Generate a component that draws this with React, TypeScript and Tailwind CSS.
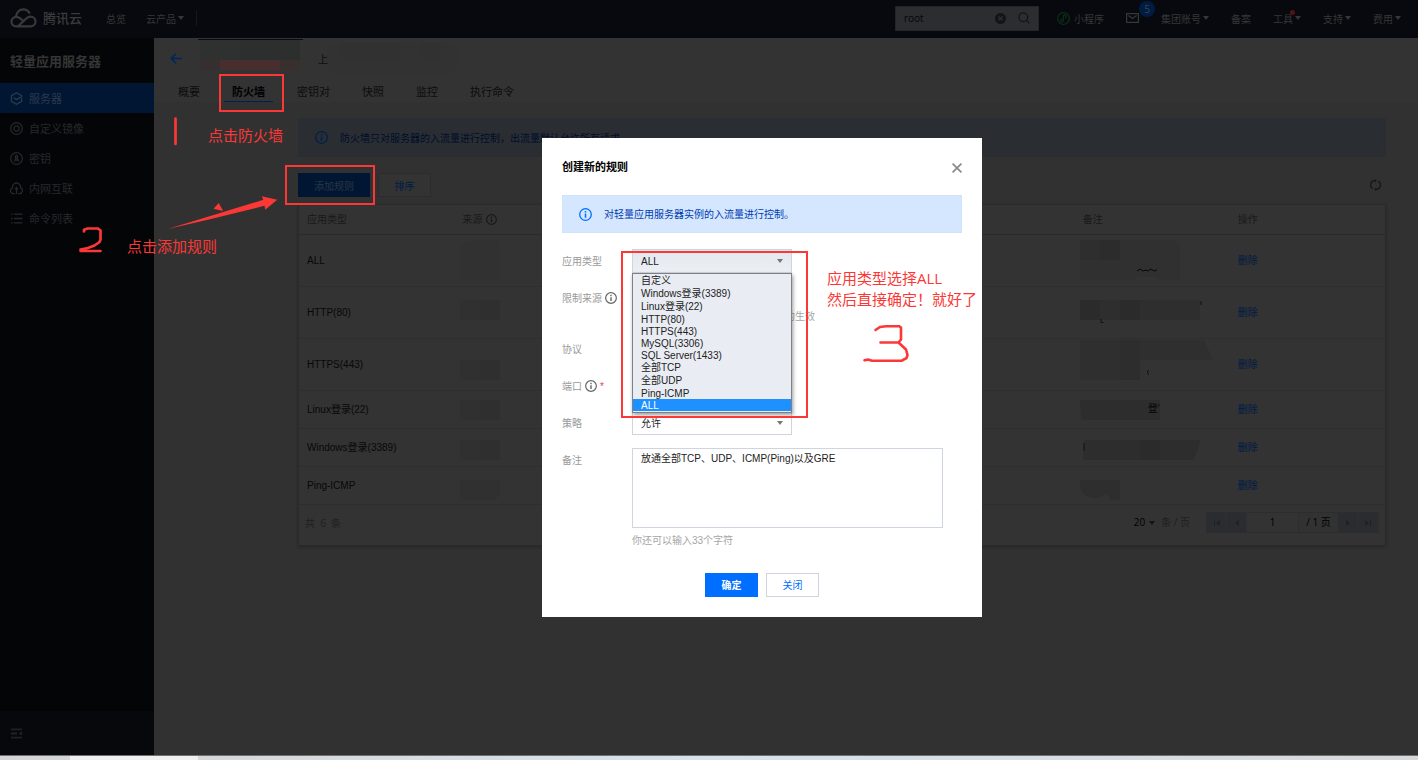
import React from "react";

const ARIAL = "font-['Liberation_Sans','Noto_Sans_CJK_SC',sans-serif]";
const YAHEI = "font-['Open_Sans','Noto_Sans_CJK_SC',sans-serif]";

function Caret({ className = "" }: { className?: string }) {
  return (
    <svg width="6" height="4" viewBox="0 0 6 4" className={`shrink-0 ${className}`} aria-hidden="true">
      <path d="M0 0h6L3 4z" fill="currentColor" />
    </svg>
  );
}

function InfoIcon({ className = "" }: { className?: string }) {
  return (
    <svg viewBox="0 0 13 13" className={`shrink-0 ${className}`} fill="none" stroke="currentColor" aria-hidden="true">
      <circle cx="6.5" cy="6.5" r="5.8" strokeWidth="1.3" />
      <path d="M6.5 5.6v4.2M6.5 3.1v1.5" strokeWidth="1.5" />
    </svg>
  );
}

function CloudLogo() {
  return (
    <svg width="27" height="20" viewBox="0 0 27 20" fill="none" stroke="#38383a" strokeWidth="2.2" aria-hidden="true">
      <path d="M12.600 12.400C10.800 10.500 8.900 8.800 6.200 8.800a4.800 4.800 0 0 0 0 9.600H20.600a4.900 4.900 0 0 0 0-9.800c-1.800 0-3 .7-4.200 1.800L8 18.200" />
      <path d="M5.900 8.800C6.300 4.500 9.300 1.300 13.200 1.300c3 0 5.400 1.700 6.500 4.300" />
    </svg>
  );
}

type NavProps = { label: string; caret?: boolean; dot?: boolean };

function NavItem({ label, caret = true, dot = false }: NavProps) {
  return (
    <a href="#" className="relative flex items-center gap-0.5 whitespace-nowrap">
      {label}
      {caret && <Caret />}
      {dot && <span className="absolute -top-px right-1.5 size-[5px] rounded-full bg-[#571214]" />}
    </a>
  );
}

function TopBar() {
  return (
    <header className="flex h-[38px] shrink-0 items-center bg-[#07090e] pb-0.5 text-[10px] text-[#363739]">
      <a href="#" className="ml-2.5 flex items-center gap-1.5 text-[13px] font-medium text-[#3b3b3d]">
        <CloudLogo />
        腾讯云
      </a>
      <nav className="ml-6 flex items-center gap-5">
        <NavItem label="总览" caret={false} />
        <NavItem label="云产品" />
      </nav>
      <span className="ml-3 h-4 w-px bg-[#15171b]" />

      <div className="mr-[17px] ml-auto flex items-center gap-[22px]">
        <div className="-mr-1 flex h-[25px] w-36 items-center gap-3 border border-[#222428] bg-[#2c2d30] px-2 text-[#141517]">
          <input
            aria-label="搜索"
            defaultValue="root"
            className={`min-w-0 flex-1 bg-transparent text-[10px] text-[#050505] outline-none ${YAHEI}`}
          />
          <button aria-label="清除">
            <svg width="11" height="11" viewBox="0 0 11 11" aria-hidden="true">
              <circle cx="5.5" cy="5.5" r="5.5" fill="#131416" />
              <path d="M3.4 3.4l4.2 4.2M7.6 3.4L3.4 7.6" stroke="#2c2d30" strokeWidth="1.4" />
            </svg>
          </button>
          <button aria-label="查找">
            <svg width="12" height="12" viewBox="0 0 12 12" fill="none" stroke="#131416" strokeWidth="1.3" aria-hidden="true">
              <circle cx="5.3" cy="5.3" r="4.4" />
              <path d="M8.4 8.4l3 3" />
            </svg>
          </button>
        </div>
        <a href="#" className="flex items-center gap-1 whitespace-nowrap">
          <svg width="13" height="13" viewBox="0 0 13 13" fill="none" stroke="#0a2f19" strokeWidth="1.3" aria-hidden="true">
            <circle cx="6.5" cy="6.5" r="5.8" />
            <path d="M4.8 7.2a1.3 1.3 0 1 0 1.5 1.3v-4a1.400 1.400 0 1 1 1.600 1.300" />
          </svg>
          小程序
        </a>
        <a href="#" aria-label="消息" className="relative">
          <svg width="13" height="10" viewBox="0 0 13 10" fill="none" stroke="currentColor" strokeWidth="1.2" aria-hidden="true">
            <path d="M.6.6h11.8v8.8H.6zM2.4 2.6l4.1 3 4.1-3" />
          </svg>
          <span className={`absolute -top-3 left-[13px] flex size-4 items-center justify-center rounded-full bg-[#001c42] text-[10px] text-[#3c444e] ${YAHEI}`}>
            5
          </span>
        </a>
        <NavItem label="集团账号" />
        <NavItem label="备案" caret={false} />
        <NavItem label="工具" dot />
        <NavItem label="支持" />
        <NavItem label="费用" />
      </div>
    </header>
  );
}

const sideIcons: Record<string, React.ReactNode> = {
  server: (
    <path d="M1.400 4v5.400l5.100 2.800 5.100-2.800V6.200M1.400 6.200V3.600L6.500.8l5.100 2.800v1.200L6.500 7.400 3.600 5.800" />
  ),
  image: (
    <>
      <circle cx="6.5" cy="6.5" r="5.8" />
      <circle cx="6.5" cy="6.5" r="2.6" />
    </>
  ),
  key: (
    <>
      <circle cx="6.5" cy="6.5" r="5.8" />
      <circle cx="6.5" cy="4.700" r="1.200" />
      <path d="M5.800 6L4.400 9.400M7.200 6l1.400 3.400M5.200 8h2.600" />
    </>
  ),
  network: (
    <>
      <path d="M4.800 11.600H3.600A2.900 2.900 0 0 1 2.400 6C2.200 3 4 1 6.500 1s4.300 2 4.100 5a2.900 2.900 0 0 1-1.200 5.600H8.200" />
      <path d="M6.500 12V6M4.900 7.400l1.600-1.800 1.600 1.800" />
    </>
  ),
  list: <path d="M1 2.200h1.600M4 2.200h8.400M1 6.500h1.600M4 6.500h8.400M1 10.800h1.600M4 10.800h8.400" />,
};

const sideItems = [
  { id: "server", label: "服务器" },
  { id: "image", label: "自定义镜像" },
  { id: "key", label: "密钥" },
  { id: "network", label: "内网互联" },
  { id: "list", label: "命令列表" },
];

function SideBar() {
  return (
    <aside className="flex w-[154px] shrink-0 flex-col bg-[#040507]">
      <h1 className="flex h-[45px] items-center px-2.5 text-[13px] font-bold text-[#353535]">轻量应用服务器</h1>
      <nav>
        {sideItems.map((item, i) => (
          <a
            key={item.id}
            href="#"
            className={`flex h-[30px] items-center gap-1.5 px-2.5 text-[11px] ${
              i === 0 ? "bg-[#001633] text-[#2c3a4d]" : "text-[#26282c]"
            }`}
          >
            <svg width="13" height="13" viewBox="0 0 13 13" fill="none" stroke="currentColor" strokeWidth="1.3" aria-hidden="true">
              {sideIcons[item.id]}
            </svg>
            {item.label}
          </a>
        ))}
      </nav>
      <div className="mt-auto flex h-11 items-center bg-[#07080c] px-2.5 text-[#1f2125]">
        <button aria-label="收起菜单">
          <svg width="13" height="11" viewBox="0 0 13 11" aria-hidden="true">
            <path d="M1 1.400h11M1 5.500h6M1 9.600h11" stroke="currentColor" strokeWidth="1.8" fill="none" />
            <path d="M12 3.400v4.200L8.400 5.500z" fill="currentColor" />
          </svg>
        </button>
      </div>
    </aside>
  );
}

const tabs = ["概要", "防火墙", "密钥对", "快照", "监控", "执行命令"];

function PageHeader() {
  return (
    <div className="relative flex h-16 flex-col bg-[#333333] px-4">
      <svg className="absolute top-0 left-0" width="320" height="40" viewBox="154 38 320 40" aria-hidden="true">
        <path d="M198 39.5h105" stroke="#0b0c10" />
        <path d="M200 40h40v20h-40z" fill="#2f3030" />
        <path d="M240 40h60v20h-60z" fill="#2d2f2e" />
        <path d="M200 60h20v10h-17q-3 0-3-3z" fill="#372f2f" />
        <path d="M220 60h60v10h-60z" fill="#482e2e" />
        <path d="M280 60h20v10h-20z" fill="#382f2f" />
        <rect x="327" y="43" width="132" height="32" rx="15" fill="#323232" />
        <path d="M340 43h60v17h-60zM420 43h20v17h-20z" fill="#313131" />
      </svg>
      <div className="relative flex h-10 items-center">
        <button aria-label="返回" className="text-[#00265a]">
          <svg width="12" height="11" viewBox="0 0 12 11" fill="none" stroke="currentColor" strokeWidth="1.6" aria-hidden="true">
            <path d="M6 .7L1.200 5.500 6 10.300M1.200 5.500H12" />
          </svg>
        </button>
        <span className="ml-[136px] text-[10px] text-[#120c08]">上</span>
      </div>
      <div role="tablist" className="flex h-6 gap-4 text-[11px] text-[#0c0c0c]">
        {tabs.map((t, i) => (
          <button
            key={t}
            role="tab"
            aria-selected={i === 1}
            className={`border-b px-2 pt-1 pb-0.5 leading-4 whitespace-nowrap ${
              i === 1 ? "border-[#002050] font-bold text-black" : "border-transparent"
            }`}
          >
            {t}
          </button>
        ))}
      </div>
    </div>
  );
}

const rows = [
  { name: "ALL", tall: true },
  { name: "HTTP(80)", tall: true },
  { name: "HTTPS(443)", tall: true },
  { name: "Linux登录(22)", tall: false },
  { name: "Windows登录(3389)", tall: false },
  { name: "Ping-ICMP", tall: false },
];

function SourceMosaic() {
  return (
    <svg className="absolute top-0 left-0" width="60" height="272" viewBox="454 235 60 272" aria-hidden="true">
      <path d="M460 248q6-8 20-8h18l2 20v20h-40z" fill="#313131" />
      <g fill="#303030">
        <path d="M460 300h40v20h-40zM460 360h40v20h-40zM460 400h40v20h-40zM460 440h40v20h-40z" />
        <path d="M460 480h40v12q-2 8-10 8h-30z" />
      </g>
      <path
        d="M480 300h20v20h-20zM480 360h20v20h-20zM480 400h20v20h-20zM480 440h20v20h-20z"
        fill="#2f2f2f"
      />
    </svg>
  );
}

function NoteMosaic() {
  return (
    <>
      <svg className="absolute top-0 left-0" width="160" height="272" viewBox="1075 235 160 272" aria-hidden="true">
        <path d="M1080 240h95q5 2 5 8v32h-20l-3-3h-19l-2 3h-56z" fill="#303030" />
        <path d="M1080 240h20v20h-20z" fill="#2e2e2e" />
        <path d="M1100 240h20v20h-20z" fill="#2c2c2c" />
        <path d="M1080 300h120v20h-120z" fill="#2e2e2e" />
        <path d="M1080 300h20v20h-20zM1120 300h20v20h-20z" fill="#2b2b2b" />
        <path d="M1080 340h124l9 20h-73v20h-60z" fill="#2f2f2f" />
        <path d="M1120 340h20v40h-20z" fill="#2d2d2d" />
        <path d="M1080 400h80v20h-79z" fill="#2d2d2d" />
        <path d="M1084 440h116q-2 12-7 20h-110z" fill="#2d2d2d" />
        <path d="M1140 440h20v20h-20z" fill="#2b2b2b" />
        <path d="M1080 480h40v20h-9l-4-7q-6 5-13 5-12-2-14-10z" fill="#2e2e2e" />
        <path d="M1137 271l3-2 3 2 3-1 2 1 3-2 3 2 3-1" fill="none" stroke="#080808" />
        <path d="M1101 319v3.500h2.500M1148.500 370l-1 2 1 3M1201 301v4M1084 443v8" fill="none" stroke="#101010" />
      </svg>
      <span className="absolute top-[166px] left-[73px] text-[10px] leading-4 text-[#050505]">登'</span>
    </>
  );
}

function RulesTable() {
  return (
    <table className={`w-full table-fixed border-separate border-spacing-0 text-[10px] ${ARIAL}`}>
      <thead className="text-left text-[#191919]">
        <tr className="h-[30px] [&>th]:border-b [&>th]:border-[#2a2a2b] [&>th]:px-2 [&>th]:font-normal">
          <th>应用类型</th>
          <th>
            <span className="flex items-center gap-1">
              来源
              <InfoIcon className="size-[11px]" />
            </span>
          </th>
          <th />
          <th />
          <th />
          <th>备注</th>
          <th>操作</th>
        </tr>
      </thead>
      <tbody className="text-[#080808]">
        {rows.map((r, i) => (
          <tr
            key={r.name}
            className={`[&>td]:border-b [&>td]:border-[#2e2e2f] [&>td]:px-2 ${r.tall ? "h-[52px]" : "h-[38px]"}`}
          >
            <td>{r.name}</td>
            <td className="relative">{i === 0 && <SourceMosaic />}</td>
            <td />
            <td />
            <td />
            <td className="relative">{i === 0 && <NoteMosaic />}</td>
            <td>
              <a href="#" className="text-[#001c45]">
                删除
              </a>
            </td>
          </tr>
        ))}
      </tbody>
    </table>
  );
}

function PageButton({ label, d }: { label: string; d: string }) {
  return (
    <button aria-label={label} className="flex w-5 items-center justify-center border-r border-[#2e2f31] bg-[#2a2c2f]">
      <svg width="6" height="6" viewBox="0 0 6 6" fill="#202123" aria-hidden="true">
        <path d={d} />
      </svg>
    </button>
  );
}

function TableFooter() {
  return (
    <div className={`flex h-10 items-start pt-[7px] pr-1.5 pl-1.5 text-[10px] text-[#1f1f1f] ${YAHEI}`}>
      <span className="leading-[22px]">共&nbsp; 6 &nbsp;条</span>
      <div className="ml-auto flex h-[21px] items-center">
        <button className="flex items-center gap-1 text-black">
          20 <Caret className="text-[#141414]" />
        </button>
        <span className="ml-1.5">条 / 页</span>
        <div className="ml-4 flex h-[21px] border border-[#2c2d2f] bg-[#2e2f30] text-black">
          <PageButton label="第一页" d="M0 0h1v6H0zM6 0v6L2 3z" />
          <PageButton label="上一页" d="M5 0v6L1 3z" />
          <input aria-label="页码" defaultValue="1" className="w-[51px] bg-[#333333] text-center outline-none" />
          <span className="flex w-10 items-center justify-center border-l border-[#2c2d2e] bg-[#323232]">/ 1 页</span>
          <PageButton label="下一页" d="M1 0v6l4-3z" />
          <PageButton label="最后一页" d="M0 0v6l4-3zM5 0h1v6H5z" />
        </div>
      </div>
    </div>
  );
}

function Content() {
  return (
    <main className="flex min-w-0 flex-1 flex-col bg-[#313131]">
      <PageHeader />
      <div className="mr-8 ml-36 pt-4">
        <div className="flex h-[39px] items-center gap-3 border border-[#2a2e34] bg-[#2a2e32] px-4 text-[10px] text-[#000d2b]">
          <InfoIcon className="size-[13px] text-[#001f49]" />
          防火墙只对服务器的入流量进行控制，出流量默认允许所有请求
        </div>
        <div className="mt-4 flex items-center gap-2 text-[10px]">
          <button className="h-6 w-[72px] bg-[#001633] text-[#2b3644]">添加规则</button>
          <button className="h-6 w-[53px] border border-[#2b2c2e] bg-[#333333] text-[#001c45]">排序</button>
          <button aria-label="刷新" className="mr-[5px] ml-auto text-[#161616]">
            <svg width="11" height="12" viewBox="0 0 11 12" fill="none" stroke="currentColor" strokeWidth="1.3" aria-hidden="true">
              <path d="M2.600 9.600A4.300 4.300 0 0 1 5.400 1.700M8.400 2.400a4.300 4.300 0 0 1-2.800 7.900" />
              <path d="M4.800.1v3.300l2-1.700zM6.200 8.600v3.300l-2-1.700z" fill="currentColor" stroke="none" />
            </svg>
          </button>
        </div>
        <section className="mt-[7px] border border-[#2a2a2b] bg-[#333333] shadow-[0_1px_3px_rgba(0,0,0,0.25)]">
          <RulesTable />
          <TableFooter />
        </section>
      </div>
    </main>
  );
}

const options = [
  { label: "自定义", cjk: true },
  { label: "Windows登录(3389)", cjk: true },
  { label: "Linux登录(22)", cjk: true },
  { label: "HTTP(80)", cjk: false },
  { label: "HTTPS(443)", cjk: false },
  { label: "MySQL(3306)", cjk: false },
  { label: "SQL Server(1433)", cjk: false },
  { label: "全部TCP", cjk: true },
  { label: "全部UDP", cjk: true },
  { label: "Ping-ICMP", cjk: false },
  { label: "ALL", cjk: false },
];

function TypeOptions() {
  return (
    <ul
      role="listbox"
      aria-label="应用类型"
      className="absolute top-6 left-0 z-10 w-40 border border-[#7d8187] bg-[#e9edf3] pb-px text-[10px] text-[#222] shadow-[1px_2px_4px_rgba(0,0,0,0.4)]"
    >
      {options.map((o, i) => (
        <li
          key={o.label}
          role="option"
          aria-selected={i === options.length - 1}
          className={`flex items-center px-2 ${o.cjk ? "h-[13px]" : "h-3"} ${
            i === options.length - 1 ? "bg-[#1e90ff] text-white" : ""
          }`}
        >
          {o.label}
        </li>
      ))}
    </ul>
  );
}

function SelectBox({ id, value, filled = false }: { id: string; value: string; filled?: boolean }) {
  return (
    <div className="relative w-40">
      <select
        id={id}
        className={`block h-6 w-full appearance-none border border-[#cfd5de] px-2 text-[10px] text-[#222] outline-none ${
          filled ? "bg-linear-to-b from-[#e4e8ee] to-[#eceff4]" : "bg-white"
        }`}
      >
        <option>{value}</option>
      </select>
      <Caret className="pointer-events-none absolute top-2.5 right-[9px] text-[#777777]" />
    </div>
  );
}

function Dialog() {
  const label = "flex w-[70px] shrink-0 items-center gap-[3px] h-6 text-[#9a9a9a]";
  return (
    <div
      role="dialog"
      aria-labelledby="dialog-title"
      className={`relative w-[440px] bg-white p-5 text-[10px] ${ARIAL}`}
    >
      <div className="flex h-[18px] items-center justify-between">
        <h2 id="dialog-title" className="text-[11px] font-bold text-black">
          创建新的规则
        </h2>
        <button aria-label="关闭窗口" className="pt-0.5 text-[#888888]">
          <svg width="10" height="10" viewBox="0 0 10 10" fill="none" stroke="currentColor" strokeWidth="1.7" aria-hidden="true">
            <path d="M.6.6l8.800 8.800M9.400.6L.6 9.400" />
          </svg>
        </button>
      </div>

      <div className="mt-[19px] flex h-[38px] items-center gap-3 border border-[#d0e3fd] bg-[#d5e7ff] px-4 text-[#003bb0]">
        <InfoIcon className="size-[13px] text-[#006eff]" />
        对轻量应用服务器实例的入流量进行控制。
      </div>

      <form className="mt-4" onSubmit={(e) => e.preventDefault()}>
        <div className="relative flex">
          <label htmlFor="type" className={label}>
            应用类型
          </label>
          <div className="relative">
            <SelectBox id="type" value="ALL" filled />
            <TypeOptions />
          </div>
        </div>
        <div className="mt-[13px] flex h-[38px]">
          <span className={label}>
            限制来源
            <InfoIcon className="size-3 text-[#666666]" />
          </span>
          <p className="w-[183px] pt-[23px] text-right leading-4 text-[#a5a5a5]">的生效</p>
        </div>
        <div className="mt-[13px] flex">
          <span className={label}>协议</span>
        </div>
        <div className="mt-[13px] flex">
          <span className={label}>
            端口
            <InfoIcon className="size-3 text-[#666666]" />
            <span className="text-[#e54545]">*</span>
          </span>
        </div>
        <div className="mt-[13px] flex">
          <label htmlFor="policy" className={label}>
            策略
          </label>
          <SelectBox id="policy" value="允许" />
        </div>
        <div className="mt-[13px] flex">
          <label htmlFor="note" className={label}>
            备注
          </label>
          <textarea
            id="note"
            defaultValue="放通全部TCP、UDP、ICMP(Ping)以及GRE"
            className="block h-20 w-[311px] resize-none border border-[#cfd5de] px-2 py-0.5 leading-4 text-[#222] outline-none"
          />
        </div>
        <p className="mt-[5px] ml-[70px] leading-4 text-[#a5a5a5]">你还可以输入33个字符</p>
        <div className="mt-6 flex justify-center gap-2">
          <button type="submit" className="h-6 w-[53px] bg-[#006eff] font-bold text-white">
            确定
          </button>
          <button type="button" className="h-6 w-[53px] border border-[#cfd5de] bg-white text-[#006eff]">
            关闭
          </button>
        </div>
      </form>

      <div className="pointer-events-none absolute top-[113px] left-[79px] z-20 h-[167px] w-[187px] border-2 border-[#fb3836]" />
      <div className={`absolute top-[130px] left-[285px] text-[15px] leading-[21px] whitespace-nowrap text-[#fb3836] ${YAHEI}`}>
        <p>应用类型选择ALL</p>
        <p>然后直接确定！就好了</p>
      </div>
      <svg
        className="absolute top-[182px] left-[318px]"
        width="52"
        height="46"
        viewBox="860 320 52 46"
        fill="none"
        stroke="#fb3836"
        strokeWidth="2.600"
        strokeLinecap="round"
        strokeLinejoin="round"
        aria-hidden="true"
      >
        <path d="M875.500 330l4.500-3 6-.8h13l2 1.300v12l-2.500 3H880.500M898.500 342.500l7.500 7 1.500 5.500-1 3-5 2.800H872l-4-1.200-3.500.6" />
      </svg>
    </div>
  );
}

function Annotations() {
  return (
    <div className="pointer-events-none absolute inset-0 text-[15px] leading-5 whitespace-nowrap text-[#fb3836]">
      <div className="absolute top-[74px] left-[219px] h-[38px] w-[65px] border-2 border-[#fb3836]" />
      <div className="absolute top-[165px] left-[285px] h-10 w-[90px] border-2 border-[#fb3836]" />
      <p className="absolute top-[125px] left-[208px]">点击防火墙</p>
      <p className="absolute top-[236px] left-[127px]">点击添加规则</p>
      <svg className="absolute top-[110px] left-[70px]" width="215" height="150" viewBox="70 110 215 150" aria-hidden="true">
        <g fill="none" stroke="#fb3836" strokeWidth="2.700" strokeLinecap="round" strokeLinejoin="round">
          <path d="M175.500 118.500v25.500" />
          <path d="M84 231.500v-1.800l3.500-1.200H98l2.500 2v9l-1 2.500-5 3.500-6.500 2.500-7.500 1.500M80.500 251h20" />
        </g>
        <g fill="#fb3836">
          <path d="M167.700 229L263.300 199.800l-1.500-3.600 15.400 3.500-12 10-.7-3.900L210 219.300z" />
          <path d="M213.500 208.700l5.200-5.700 4.500 8z" />
        </g>
      </svg>
    </div>
  );
}

export default function App() {
  return (
    <div className="relative flex min-h-screen flex-col bg-[#313131] font-['Noto_Sans_CJK_SC',sans-serif]">
      <TopBar />
      <div className="flex flex-1">
        <SideBar />
        <Content />
      </div>
      <div className="flex h-[5px] shrink-0 border-t border-[#707070] bg-linear-to-r from-[#d4d4d4] via-[#d8e2ea] to-[#d6d9dc]">
        <span className="ml-[70px] w-32 bg-[#f0f0f0]" />
      </div>
      <div className="absolute inset-0 flex items-center justify-center pb-[5px] pl-[106px]">
        <Dialog />
      </div>
      <Annotations />
    </div>
  );
}
